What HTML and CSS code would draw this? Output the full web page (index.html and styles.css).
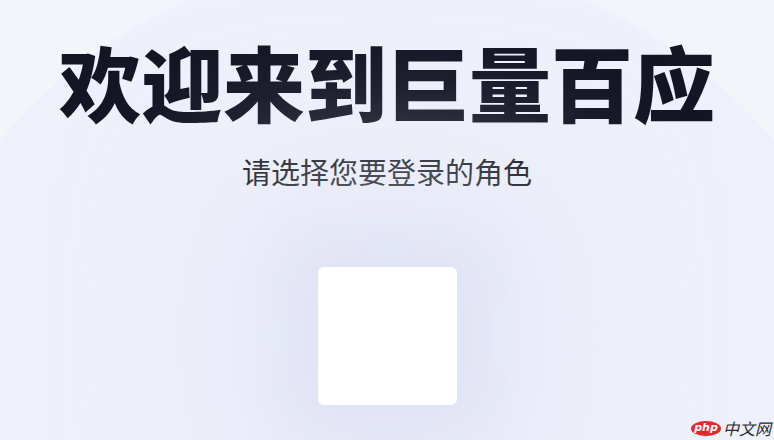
FILE: index.html
```html
<!DOCTYPE html>
<html lang="zh-CN">
<head>
<meta charset="utf-8">
<title>欢迎来到巨量百应</title>
<link rel="stylesheet" href="styles.css">
</head>
<body>
<div class="page">
  <div class="bg-circle"></div>
  <main class="content">
    <h1 class="title">欢迎来到巨量百应</h1>
    <p class="subtitle">请选择您要登录的角色</p>
    <div class="role-card"></div>
  </main>
  <div class="watermark">
    <span class="php-badge">php</span>
    <span class="php-cn">中文网</span>
  </div>
</div>
</body>
</html>
```
FILE: styles.css
```css
html, body {
  margin: 0;
  padding: 0;
}
body {
  width: 774px;
  height: 440px;
  overflow: hidden;
  background: #f4f5fa;
  font-family: "Noto Sans CJK SC", "Noto Sans", sans-serif;
}
.page {
  position: relative;
  width: 774px;
  height: 440px;
  overflow: hidden;
}
.bg-circle {
  position: absolute;
  left: -118px;
  top: -40px;
  width: 1010px;
  height: 1010px;
  border-radius: 50%;
  background: #eef0fb;
}
.content {
  position: relative;
  display: flex;
  flex-direction: column;
  align-items: center;
  padding-top: 40px;
}
.title {
  margin: 0;
  font-size: 82px;
  line-height: 1;
  font-weight: 900;
  color: #141624;
}
.subtitle {
  margin: 35px 0 0;
  font-size: 29px;
  line-height: 1;
  font-weight: 400;
  color: #111318;
}
.role-card {
  margin-top: 81px;
  width: 139px;
  height: 138px;
  background: #ffffff;
  border-radius: 6px;
  box-shadow: 0 0 60px 30px rgba(218, 222, 240, 0.6), 0 0 150px 90px rgba(226, 229, 245, 0.55);
}
.watermark {
  position: absolute;
  right: 3px;
  bottom: 3px;
  display: flex;
  align-items: center;
  gap: 2px;
}
.php-badge {
  display: inline-block;
  width: 30px;
  height: 15px;
  border-radius: 50%;
  background: #e8262b;
  color: #fff;
  font-family: "DejaVu Sans", sans-serif;
  font-style: italic;
  font-weight: 700;
  font-size: 11px;
  line-height: 14px;
  text-align: center;
}
.php-cn {
  font-size: 16px;
  font-style: italic;
  color: #2b2b2b;
  line-height: 18px;
}
```
